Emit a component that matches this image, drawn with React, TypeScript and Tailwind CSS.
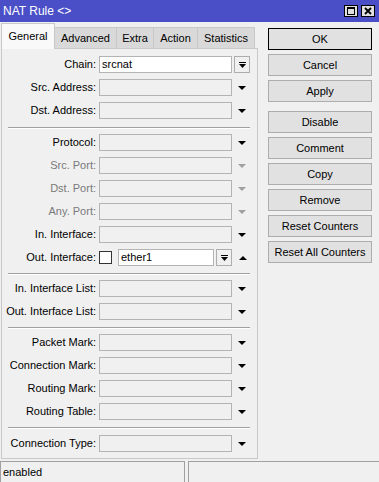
import React from "react";

const Tri = ({ up = false, gray = false }: { up?: boolean; gray?: boolean }) => (
  <div className="w-[16px] h-[17px] flex items-center justify-center ml-[2px] shrink-0">
    <svg width="8" height="4" viewBox="0 0 8 4">
      {up ? (
        <polygon points="0,4 8,4 4,0" fill={gray ? "#a0a0a0" : "#000"} />
      ) : (
        <polygon points="0,0 8,0 4,4" fill={gray ? "#a0a0a0" : "#000"} />
      )}
    </svg>
  </div>
);

const DropBtn = ({ w = "w-[16px]" }: { w?: string }) => (
  <div className={`${w} h-[17px] border border-[#adadad] bg-[#f0f0f0] flex items-center justify-center ml-[2px] shrink-0`}>
    <svg width="7" height="6" viewBox="0 0 7 6">
      <rect x="0" y="0" width="7" height="1" fill="#000" />
      <polygon points="0,2 7,2 3.5,6" fill="#000" />
    </svg>
  </div>
);

const Label = ({ text, gray = false }: { text: string; gray?: boolean }) => (
  <div className={`w-[94px] text-right shrink-0 mr-[3px] ${gray ? "text-[#7a7a7a]" : "text-black"}`}>{text}</div>
);

const Row = ({ label, gray = false }: { label: string; gray?: boolean }) => (
  <div className="flex items-center h-[17px]">
    <Label text={label} gray={gray} />
    <div className="w-[133px] h-[17px] border border-[#b4b4b4] bg-[#f0f0f0] shrink-0" />
    <Tri gray={gray} />
  </div>
);

const Sep = ({ mt, mb }: { mt: string; mb: string }) => (
  <div className={`${mt} ${mb} ml-[6px] w-[242px] h-[2px] border-t border-[#a0a0a0] border-b border-b-white`} />
);

const Btn = ({ text, def = false, extra = "" }: { text: string; def?: boolean; extra?: string }) => (
  <div
    className={`w-[104px] h-[22px] flex items-center justify-center bg-[#e1e1e1] border ${
      def ? "border-black" : "border-[#adadad]"
    } ${extra}`}
  >
    {text}
  </div>
);

export default function App() {
  return (
    <div
      className="w-[379px] h-[482px] bg-[#f0f0f0] flex flex-col text-[11px] text-black overflow-hidden"
      style={{ fontFamily: '"Liberation Sans", Arial, sans-serif' }}
    >
      {/* Title bar */}
      <div className="h-[22px] bg-[#4a4fc8] flex items-center pl-[3px] pr-[4px] shrink-0">
        <div className="text-white text-[12px] flex-1">NAT Rule &lt;&gt;</div>
        <div className="flex gap-[3px]">
          <div className="w-[14px] h-[12px] bg-[#e0e0e0] border border-black flex items-center justify-center">
            <div className="w-[8px] h-[8px] border border-black border-t-2" />
          </div>
          <div className="w-[14px] h-[12px] bg-[#e0e0e0] border border-black flex items-center justify-center">
            <svg width="8" height="8" viewBox="0 0 8 8">
              <path d="M1 1 L7 7 M7 1 L1 7" stroke="#000" strokeWidth="1.8" />
            </svg>
          </div>
        </div>
      </div>

      <div className="flex shrink-0">
        {/* Left column */}
        <div className="ml-[1px] w-[257px] flex flex-col">
          {/* Tabs */}
          <div className="h-[26px] flex items-end relative">
            <div className="w-[54px] h-[25px] bg-[#f9f9f9] border border-[#c8c8c8] border-b-0 flex items-center justify-center pb-[1px] relative z-10 -mb-[1px] h-[26px]">
              General
            </div>
            <div className="w-[62px] h-[21px] bg-[#d9d9d9] border-t border-r border-[#c8c8c8] flex items-center justify-center">
              Advanced
            </div>
            <div className="w-[37px] h-[21px] bg-[#d9d9d9] border-t border-r border-[#c8c8c8] flex items-center justify-center">
              Extra
            </div>
            <div className="w-[44px] h-[21px] bg-[#d9d9d9] border-t border-r border-[#c8c8c8] flex items-center justify-center">
              Action
            </div>
            <div className="w-[57px] h-[21px] bg-[#d9d9d9] border-t border-r border-[#c8c8c8] flex items-center justify-center">
              Statistics
            </div>
          </div>
          {/* Panel */}
          <div className="h-[411px] border border-[#c8c8c8] bg-[#f0f0f0] pt-[7px] flex flex-col">
            <div className="flex flex-col gap-[6px]">
              <div className="flex items-center h-[17px]">
                <Label text="Chain:" />
                <div className="w-[133px] h-[17px] border border-[#b4b4b4] bg-white shrink-0 flex items-center pl-[2px]">
                  srcnat
                </div>
                <DropBtn />
              </div>
              <Row label="Src. Address:" />
              <Row label="Dst. Address:" />
            </div>
            <Sep mt="mt-[8px]" mb="mb-[5px]" />
            <div className="flex flex-col gap-[6px]">
              <Row label="Protocol:" />
              <Row label="Src. Port:" gray />
              <Row label="Dst. Port:" gray />
              <Row label="Any. Port:" gray />
              <Row label="In. Interface:" />
              <div className="flex items-center h-[17px]">
                <Label text="Out. Interface:" />
                <div className="w-[13px] h-[13px] border border-[#333] bg-white shrink-0" />
                <div className="ml-[6px] w-[96px] h-[17px] border border-[#b4b4b4] bg-white shrink-0 flex items-center pl-[2px]">
                  ether1
                </div>
                <DropBtn w="w-[16px]" />
                <div className="w-[13px] shrink-0" />
                <svg width="8" height="4" viewBox="0 0 8 4" className="-ml-[6px]">
                  <polygon points="0,4 8,4 4,0" fill="#000" />
                </svg>
              </div>
            </div>
            <Sep mt="mt-[7px]" mb="mb-[5px]" />
            <div className="flex flex-col gap-[6px]">
              <Row label="In. Interface List:" />
              <Row label="Out. Interface List:" />
            </div>
            <Sep mt="mt-[7px]" mb="mb-[5px]" />
            <div className="flex flex-col gap-[6px]">
              <Row label="Packet Mark:" />
              <Row label="Connection Mark:" />
              <Row label="Routing Mark:" />
              <Row label="Routing Table:" />
            </div>
            <Sep mt="mt-[7px]" mb="mb-[6px]" />
            <div className="flex flex-col gap-[6px]">
              <Row label="Connection Type:" />
            </div>
          </div>
        </div>

        {/* Right column */}
        <div className="ml-[10px] mt-[6px] flex flex-col gap-[4px]">
          <Btn text="OK" def />
          <Btn text="Cancel" />
          <Btn text="Apply" />
          <Btn text="Disable" extra="mt-[5px]" />
          <Btn text="Comment" />
          <Btn text="Copy" />
          <Btn text="Remove" />
          <Btn text="Reset Counters" />
          <Btn text="Reset All Counters" />
        </div>
      </div>

      {/* Status bar */}
      <div className="mt-[2px] h-[21px] flex shrink-0">
        <div className="w-[185px] h-[21px] border-t border-l border-r border-[#a0a0a0] flex items-center pl-[2px]">
          enabled
        </div>
        <div className="ml-[3px] flex-1 h-[21px] border-t border-l border-[#a0a0a0]" />
      </div>
    </div>
  );
}
